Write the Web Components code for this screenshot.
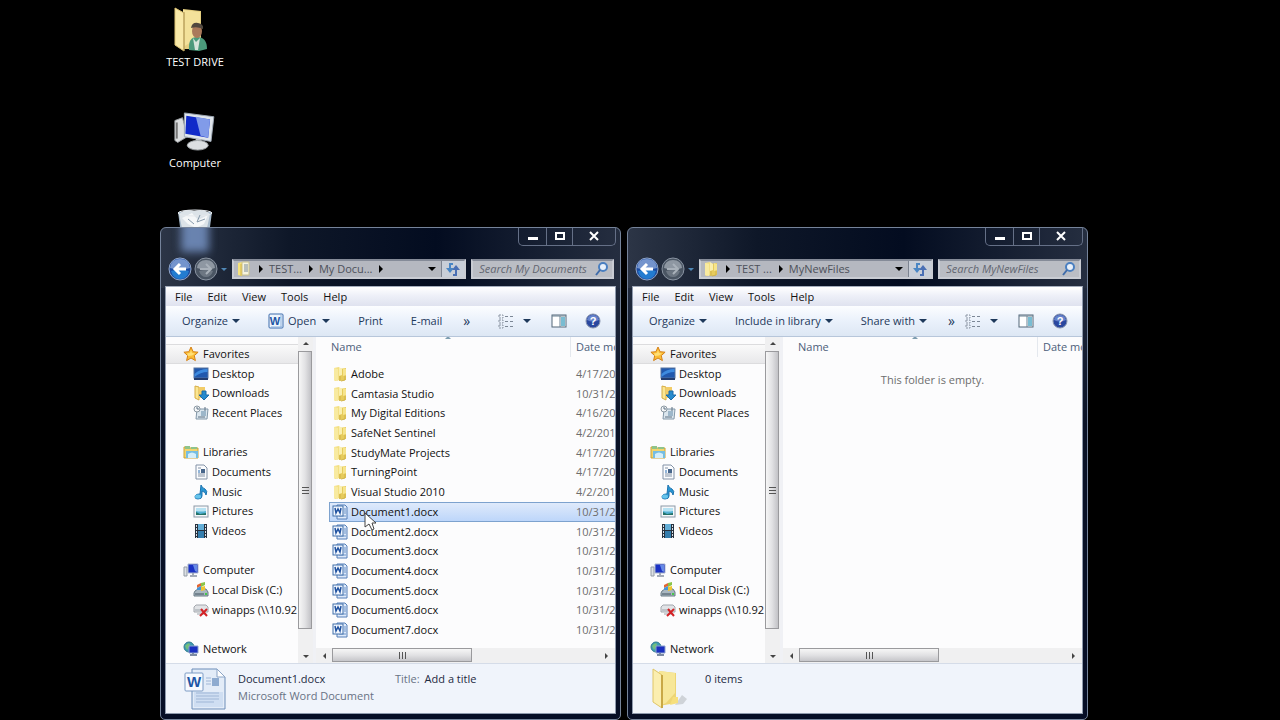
<!DOCTYPE html>
<html lang="en">
<head>
<meta charset="utf-8">
<title>Desktop</title>
<style>
html,body{margin:0;height:100%;background:#000}
body{font:11px/16px "Open Sans","Noto Sans",sans-serif}
</style>
</head>
<body>
<desk-top>
  <desktop-icon slot="icons" icon="userfolder" label="TEST DRIVE"></desktop-icon>
  <desktop-icon slot="icons" icon="bigcomputer" label="Computer"></desktop-icon>
  <desktop-icon slot="icons" icon="bin" label=""></desktop-icon>

  <explorer-window crumbs="TEST...|My Docu...|" icon="docfolder" search="Search My Documents" shade>
    <tool-button slot="tools" menu>Organize</tool-button>
    <tool-button slot="tools" icon="word" menu wide>Open</tool-button>
    <tool-button slot="tools">Print</tool-button>
    <tool-button slot="tools">E-mail</tool-button>
    <file-list files="Adobe:4/17/20|Camtasia Studio:10/31/2|My Digital Editions:4/16/20|SafeNet Sentinel:4/2/201|StudyMate Projects:4/17/20|TurningPoint:4/17/20|Visual Studio 2010:4/2/201|Document1.docx:10/31/2|Document2.docx:10/31/2|Document3.docx:10/31/2|Document4.docx:10/31/2|Document5.docx:10/31/2|Document6.docx:10/31/2|Document7.docx:10/31/2" selected="Document1.docx"></file-list>
    <details-pane slot="details" icon="bigdoc">
      <span slot="name">Document1.docx</span>
      <span slot="kind">Microsoft Word Document</span>
      <span slot="label">Title:</span>
      <span slot="value">Add a title</span>
    </details-pane>
  </explorer-window>

  <explorer-window crumbs="TEST ...|MyNewFiles" icon="folder" search="Search MyNewFiles">
    <tool-button slot="tools" menu>Organize</tool-button>
    <tool-button slot="tools" menu>Include in library</tool-button>
    <tool-button slot="tools" menu>Share with</tool-button>
    <file-list files=""></file-list>
    <details-pane slot="details" icon="bigfolder">
      <span slot="name">0 items</span>
    </details-pane>
  </explorer-window>
  <ui-icon slot="pointer" name="pointer"></ui-icon>
</desk-top>

<script>
const ICONS = {
  folder: [16,16,'<path d="M2 2l5-1 1 13-5 1-1-1z" fill="#f3df83"/><path d="M7 3l7-1v12l-7 1z" fill="#e6cb5c"/><path d="M2 2l4 1v12l-4-1z" fill="#f8eaa0"/><path d="M7 1l3 2v6l-3 1z" fill="#faefae"/><path d="M11 2l3 1v6l-3 1z" fill="#f6e48c"/><path d="M8 10v5M13 10v4l-4 1" stroke="#d0b246" fill="none"/>'],
  docfolder: [16,16,'<path d="M2 2l4-1v14l-4-1z" fill="#f6e27a"/><path d="M6 1h7v13H6z" fill="#f5f3df" stroke="#c8c08a"/><path d="M8 4h4M8 6h4M8 8h4M8 10h4" stroke="#7b8a96"/><path d="M5 3v12" stroke="#d3b64a"/>'],
  word: [16,16,'<rect x="1" y="1" width="14" height="14" rx="1" fill="#eef5fd" stroke="#3d6cad"/><path d="M13 2v12M3 14h11" stroke="#8db1dd"/><text x="7" y="12" text-anchor="middle" font-family="Liberation Sans" font-weight="700" font-size="11" fill="#2256a4">W</text>'],
  docx: [16,16,'<path d="M5 1h8l2 2v12H5z" fill="#dfeafa" stroke="#547fb8"/><path d="M12 5h2M12 7h2M12 9h2M7 12h7" stroke="#6d94c8"/><rect x="1" y="2" width="10" height="10" fill="#f3f8ff" stroke="#416fa9"/><path d="M3 4l1 5 2-4 2 4 1-5" fill="none" stroke="#2052a0" stroke-width="1.5"/>'],
  star: [16,16,'<path d="M8 1l2.1 4.7 5 .5-3.8 3.4 1.1 5L8 12l-4.4 2.6 1.1-5L.9 6.2l5-.5z" fill="#fbbd35" stroke="#d58118"/><path d="M8 4l1 3 3 .4-3 2-4 .5-1-2.5 3-.4z" fill="#ffdf76"/>'],
  desktop: [16,16,'<rect x="1" y="2" width="14" height="10" fill="#2158ad" stroke="#5472a0"/><path d="M1.500 8q5-5 13-5v3q-7 0-13 5z" fill="#3e8bdf"/><path d="M1 13h14" stroke="#243d6e" stroke-width="2"/>'],
  downloads: [16,16,'<path d="M2 1l4 1v13l-4-2z" fill="#fbe692" stroke="#d6ac44"/><path d="M6 2h6v11H6z" fill="#f2cc68"/><path d="M9 6h4v4h3l-5 5-5-5h3z" fill="#278bce" stroke="#1b6aa9"/>'],
  recent: [16,16,'<path d="M4 4h11l-1 10H3z" fill="#dbe6ee" stroke="#8297a8"/><path d="M8 6h5v5H8z" fill="#9db7ca"/><circle cx="4" cy="4" r="3" fill="#f5f7f9" stroke="#8b98a2"/><path d="M4 2v2h2M5 12h7M12 2v4" stroke="#5d7182" fill="none"/>'],
  libraries: [16,16,'<path d="M1 3h5l1 1h8v10H1z" fill="#f2d46d" stroke="#c9a33a"/><path d="M2 2h5v3H2zM8 3h6v2H8z" fill="#8fc48a"/><path d="M3 7h12v7H3z" fill="#75bde2"/><path d="M5 10q4-3 8 0v4H5z" fill="#d4eefa"/>'],
  documents: [16,16,'<path d="M3 1h8l3 3v11H3z" fill="#fbfcfe" stroke="#8392a6"/><path d="M5 4h3M5 10h7M5 12h7" stroke="#8291a4"/><path d="M8 5h4v4H8z" fill="#48668b"/><path d="M5 6h2v3H5z" fill="#92b5d9"/>'],
  music: [16,16,'<path d="M8 1q1 3 4 4 3 2 1 6 0-3-4-4v5q0 3-4 3-3 0-3-2 0-3 5-3z" fill="#2996d3" stroke="#1d74b0"/><ellipse cx="5" cy="12.500" rx="3" ry="2" fill="#67c4eb"/>'],
  pictures: [16,16,'<rect x="1" y="3" width="14" height="11" fill="#f6f8fa" stroke="#8c99a7"/><path d="M3 5h10v7H3z" fill="#55b2d4"/><path d="M3 5h10v3q-5 1-10 0z" fill="#b7e2f2"/><path d="M3 9l4 2 6-1v2H3z" fill="#247268"/>'],
  videos: [16,16,'<path d="M2 1h12v14H2z" fill="#28323e"/><path d="M5 1h6v6H5z" fill="#62add6"/><path d="M5 8h6v7H5z" fill="#357eae"/><path d="M3.500 2v13M12.500 2v13" stroke="#d8e0e8" stroke-dasharray="2 1"/>'],
  computer: [16,16,'<path d="M1 5h3v9H1z" fill="#dce0e5" stroke="#949ca5"/><path d="M5 2h10v9H5z" fill="#1b32c4" stroke="#a9b5cf"/><path d="M10 3h4v7l-2-1z" fill="#668ae6"/><path d="M10 11v2M7 14h7" stroke="#a3abb8" stroke-width="2"/>'],
  disk: [16,16,'<path d="M2 9l3-2h8l2 3v4H1v-3z" fill="#a9b7c0" stroke="#697a84"/><path d="M2 12h9" stroke="#41515f"/><path d="M12 12h2" stroke="#45c94b" stroke-width="2"/><path d="M4 3l4-2v3L4 6z" fill="#e36632"/><path d="M8 1l4-1v3L8 5z" fill="#8ac447"/><path d="M4 6l4-2v4H4z" fill="#4695d8"/><path d="M8 5l4-1v4L8 9z" fill="#f0c52f"/>'],
  netdrive: [16,16,'<path d="M1 5l2-2h10l2 2v5H1z" fill="#e1e3e6" stroke="#a3a7ad"/><path d="M2 8h8M4 12h9" stroke="#9da4ab"/><path d="M8 7l6 7M14 7l-7 7" stroke="#d32226" stroke-width="2"/>'],
  network: [16,16,'<circle cx="6" cy="6" r="5" fill="#3f9ab2" stroke="#307b8e"/><path d="M2 5q3-4 5-2L6 6 4 9z" fill="#73bf7d"/><path d="M6 5h9v7H6z" fill="#1a2fc0" stroke="#8ba1cd"/><path d="M10 12v2M7 14h7" stroke="#7c8ba3" stroke-width="2"/>'],
  refresh: [16,16,'<path d="M8 3H5v6" fill="none" stroke="#4a86c4" stroke-width="2"/><path d="M1 7h8l-4 5z" fill="#4a86c4"/><path d="M8 14h3V8" fill="none" stroke="#4a6fb4" stroke-width="2"/><path d="M7 9h8l-4-5z" fill="#4a6fb4"/>'],
  search: [16,16,'<circle cx="9" cy="6" r="4" fill="#e8f0fa" stroke="#4a7fc0" stroke-width="2"/><path d="M6 9l-4 5" stroke="#3f6ba9" stroke-width="2"/>'],
  views: [16,16,'<path d="M1 2h4v3H1zM1 7h4v3H1zM1 12h4v3H1z" fill="none" stroke="#8b95a3" stroke-dasharray="2 1"/><path d="M7 3.500h3M12 3.500h3M7 8.500h3M12 8.500h3M7 13.500h3M12 13.500h3" stroke="#7c8796"/>'],
  pane: [16,16,'<rect x="1" y="2" width="14" height="12" fill="#fff" stroke="#536779"/><path d="M10 4h4v9h-4z" fill="#79bcd2"/><path d="M9 3v11M1 3h14" stroke="#6b8192"/>'],
  help: [16,16,'<circle cx="8" cy="8" r="7" fill="#2a479f" stroke="#8995ae"/><path d="M2 7q6 3 12 0-1-5-6-5T2 7" fill="#6582cb"/><text x="8" y="12" text-anchor="middle" font-family="Liberation Sans" font-weight="700" font-size="11" fill="#fff">?</text>'],
  back: [24,24,'<circle cx="12" cy="12" r="11" fill="#1c4ba0" stroke="#91a5c7"/><path d="M2 11Q3 2 12 2t10 9q-10 3-20 0" fill="#7494cd"/><path d="M3 14q9-3 18 0-2 8-9 8t-9-8" fill="#237cd0"/><path d="M18 12H8M12 7l-5 5 5 5" stroke="#fff" stroke-width="3" fill="none"/>'],
  forward: [24,24,'<circle cx="12" cy="12" r="11" fill="#4a5563" stroke="#8a94a2"/><path d="M3 11q1-8 9-8t9 8q-9 3-18 0" fill="#8e97a2"/><path d="M5 14q7-2 14 0-2 6-7 6t-7-6" fill="#6c7682"/><path d="M6 12h10M12 7l5 5-5 5" stroke="#a9b1ba" stroke-width="2" fill="none"/>'],
  down: [8,6,'<path d="M0 1h8L4 5z" fill="currentColor"/>'],
  right: [6,8,'<path d="M1 0l4 4-4 4z" fill="currentColor"/>'],
  left: [6,8,'<path d="M5 1L2 4l3 3z" fill="currentColor"/>'],
  up: [8,6,'<path d="M1 4h6L4 1z" fill="currentColor"/>'],
  smalldown: [8,6,'<path d="M1 2h6L4 5z" fill="currentColor"/>'],
  smallright: [6,8,'<path d="M1 1l3 3-3 3z" fill="currentColor"/>'],
  min: [12,10,'<path d="M1 6h10v3H1z" fill="#fff"/>'],
  max: [12,10,'<path d="M2 2h8v6H2z" fill="none" stroke="#fff" stroke-width="2"/>'],
  close: [12,10,'<path d="M2 1l8 8M10 1L2 9" stroke="#fff" stroke-width="2"/>'],
  pointer: [14,22,'<path d="M1 1v14l4-3 3 6 2-1-2-6h4z" fill="#fff" stroke="#444"/>'],
  bigdoc: [42,42,'<path d="M8 1h25l8 8v32H8z" fill="#e3ecf8" stroke="#6c8db8"/><path d="M10 24h29v15H10z" fill="#cfdef2"/><path d="M33 1v8h8z" fill="#fff" stroke="#8ba4c6"/><path d="M22 10h5M22 13h5M22 16h5M12 25h23M12 28h23M12 31h23M12 34h18" stroke="#9fb6d6"/><path d="M28 10h7v8h-7z" fill="#8eabd0"/><rect x="1" y="5" width="18" height="18" rx="1" fill="#f7faff" stroke="#7c9bc4"/><text x="10" y="19" text-anchor="middle" font-family="Liberation Sans" font-weight="700" font-size="15" fill="#1e56a5">W</text>'],
  bigfolder: [42,42,'<g transform="translate(-3)"><path d="M27 37l7-10 5 4-4 5z" fill="#cfd3d8"/><path d="M11 3l17 2v30l-17 3z" fill="#edd574"/><path d="M11 3l16 2v20l-9 10-7 3z" fill="#f7e798"/><path d="M5 1l9 6v33l-9-6z" fill="#fbeeb0" stroke="#e0c566"/><path d="M14 7v33" stroke="#c9a846" stroke-width="2"/><path d="M25 29h5v6l-8 2z" fill="#f6df7d"/></g>'],
  userfolder: [46,46,'<g transform="translate(-3)"><path d="M14 2l18 2v38H14z" fill="#e5cf80"/><path d="M14 3l17 2v25l-17 10z" fill="#f3e19a"/><path d="M6 1l9 5v38l-9-6z" fill="#f9e9a8" stroke="#dec475"/><path d="M15 5v39" stroke="#aa9153"/><path d="M20 43q-1-13 8-13 10 0 10 12l-8 2z" fill="#4b9a7b"/><path d="M24 31l3 4 4-4-2 12h-3z" fill="#d5e5db"/><ellipse cx="28" cy="24" rx="5" ry="7" fill="#aa795b"/><path d="M22 21q1-6 7-5 6 1 5 6-6-3-12-1" fill="#51483f"/></g>'],
  bigcomputer: [44,46,'<g transform="translate(0 4) scale(.95)"><path d="M2 9l8-3 5 20-10 6-3-2z" fill="#dcdedf" stroke="#9b9fa2"/><path d="M4 11v17" stroke="#777" stroke-width="2"/><path d="M12 1l31 4-3 26-28-5z" fill="#dfe5eb" stroke="#9ca7b3"/><path d="M14 4l25 4-2 19-24-4z" fill="#102ac9"/><path d="M24 5l15 3-2 19-8-2z" fill="#819be9"/><path d="M24 28l6 1-1 7h-6z" fill="#c0c5c9"/><ellipse cx="26" cy="35" rx="11" ry="5" fill="#dcdfe2" stroke="#a0a5a9"/></g>'],
  bin: [44,42,'<path d="M5 3h34l-5 37H10z" fill="#a6b9ca"/><path d="M6 5q6-6 15-3 10-3 16 3l-3 14H9z" fill="#dce3e8"/><path d="M9 9l10-5 6 7 10-5-4 9-8 4-8-4z" fill="#f5f7f8"/><ellipse cx="22" cy="4" rx="17" ry="3" fill="none" stroke="#e4e8ec"/><path d="M15 10l6 5M27 6l-3 7 8-3" stroke="#8799aa" fill="none"/>']
};

function define(name, render) {
  customElements.define(name, class extends HTMLElement {
    connectedCallback() {
      if (this.shadowRoot) return;
      this.attachShadow({mode: 'open'}).innerHTML = render(this);
    }
  });
}
const reset = 'button{font:inherit;color:inherit;background:none;border:0;padding:0;display:flex;align-items:center}*{box-sizing:border-box}';

define('ui-icon', el => {
  const [w, h, art] = ICONS[el.getAttribute('name')];
  return `<style>:host{display:block;flex:none}svg{display:block}</style><svg width="${w}" height="${h}" viewBox="0 0 ${w} ${h}" aria-hidden="true">${art}</svg>`;
});

define('desk-top', () => `<style>
  :host{display:block;position:relative;box-sizing:border-box;width:75%;min-height:100vh;margin:0 auto;padding-top:227px;background:#000}
  .icons{position:absolute;top:7px;left:0;width:70px;display:grid;grid-auto-rows:101px}
  main{position:relative;display:grid;grid-template-columns:1fr 1fr;gap:6px;padding-right:32px;height:calc(100vh - 227px);min-height:493px}
  .pointer{position:absolute;left:204px;top:512px}
  </style><div class="icons"><slot name="icons"></slot></div><main><slot></slot></main><div class="pointer"><slot name="pointer"></slot></div>`);

define('desktop-icon', el => `<style>
  :host{display:flex;flex-direction:column;align-items:center;color:#fff}
  ui-icon{height:47px}
  </style><ui-icon name="${el.getAttribute('icon')}"></ui-icon><span>${el.getAttribute('label')}</span>`);

define('tool-button', el => `<style>${reset}
  :host{display:block;color:#1e395b}
  button{padding:0 14px;gap:4px;height:24px;white-space:nowrap}
  .wide{margin-left:2px}
  </style><button type="button">${el.hasAttribute('icon') ? `<ui-icon name="${el.getAttribute('icon')}"></ui-icon>` : ''}<slot></slot>${el.hasAttribute('menu') ? `<ui-icon name="down" class="${el.hasAttribute('wide') ? 'wide' : ''}"></ui-icon>` : ''}</button>`);

define('scroll-bar', el => {
  const v = el.hasAttribute('vertical');
  return `<style>${reset}
  :host{display:flex;box-sizing:border-box;color:#444;background:#f0f0f1;${v ? 'flex-direction:column;width:15px' : 'height:15px'}}
  button{flex:none;justify-content:center;${v ? 'height:14px' : 'width:16px'}}
  .track{flex:1;display:flex;flex-direction:${v ? 'column' : 'row'}}
  .thumb{display:flex;align-items:center;justify-content:center;border:1px solid #9a9a9d;${v
    ? 'width:14px;flex:277 0 0;background:linear-gradient(90deg,#f6f6f6,#e2e2e4 50%,#c2c2c6)'
    : 'height:14px;flex:139 0 0;background:linear-gradient(#f6f6f6,#e2e2e4 50%,#c6c6ca)'}}
  .rest{flex:${v ? '20' : '127'} 0 0}
  .grip{width:7px;height:7px;background:repeating-linear-gradient(${v ? '0deg' : '90deg'},#555 0 1px,transparent 1px 3px)}
  </style><button type="button" aria-label="Back"><ui-icon name="${v ? 'up' : 'left'}"></ui-icon></button>
  <div class="track"><div class="thumb"><div class="grip"></div></div><div class="rest"></div></div>
  <button type="button" aria-label="Forward"><ui-icon name="${v ? 'smalldown' : 'smallright'}"></ui-icon></button>`;
});

const NAV = [['star','Favorites',0],['desktop','Desktop',1],['downloads','Downloads',1],['recent','Recent Places',1],null,
  ['libraries','Libraries',0],['documents','Documents',1],['music','Music',1],['pictures','Pictures',1],['videos','Videos',1],null,
  ['computer','Computer',0],['disk','Local Disk (C:)',1],['netdrive','winapps (\\\\10.92',1],null,['network','Network',0]];
define('nav-tree', () => `<style>
  :host{display:block;min-width:0;overflow:hidden;padding-top:7px;background:#fcfcfd}
  ul{list-style:none;margin:0;padding:0;height:315px;display:grid;grid-template-rows:repeat(16,1fr)}
  li{min-height:0;display:flex}
  a{flex:1;display:flex;align-items:center;gap:4px;padding-left:17px;color:#111;text-decoration:none;white-space:nowrap}
  a.child{padding-left:27px;gap:3px}
  li:first-child a{background:linear-gradient(#fafafa,#e8e8ea);border:solid #dcdcde;border-width:1px 0;box-sizing:border-box}
  </style><nav><ul>${NAV.map(n => n ? `<li><a href="#" class="${n[2] ? 'child' : ''}"><ui-icon name="${n[0]}"></ui-icon><span>${n[1]}</span></a></li>` : '<li></li>').join('')}</ul></nav>`);

define('file-list', el => {
  const files = el.getAttribute('files').split('|').filter(Boolean).map(f => f.split(':'));
  return `<style>
  :host{display:flex;flex-direction:column;flex:1;min-width:0;overflow:hidden;background:#fcfcfd}
  table,thead{display:block}
  tr{display:grid;grid-template-columns:15px 239px 1fr;align-items:center;position:relative}
  th,td{padding:0;font-weight:400;text-align:left;white-space:nowrap;min-width:0}
  th{color:#4c607a;line-height:20px}
  th:nth-child(1),td:nth-child(1){grid-column:2}
  th:last-child{border-left:1px solid #e4e8ee;padding-left:5px}
  thead ui-icon{position:absolute;left:128px;top:-2px;color:#7e9db0}
  tbody{display:grid;grid-template-rows:repeat(14,1fr);height:276px;margin-top:7px}
  tbody tr{min-height:0;margin-left:13px;grid-template-columns:2px 242px 1fr;border:1px solid transparent;box-sizing:border-box}
  td:first-child{display:flex;align-items:center;gap:3px;color:#111}
  td:last-child{color:#6d6d6d;padding-left:2px}
  tr.on{border-color:#7da2ce;border-right:0;background:linear-gradient(#dfeafb,#bdd6fa)}
  p{margin:15px 0 0;text-align:center;color:#6d6d6d}
  </style><table><thead><tr><th scope="col">Name<ui-icon name="up"></ui-icon></th><th scope="col">Date mo</th></tr></thead>
  ${files.length ? `<tbody>${files.map(([n, d]) => `<tr class="${n === el.getAttribute('selected') ? 'on' : ''}"><td><ui-icon name="${n.endsWith('.docx') ? 'docx' : 'folder'}"></ui-icon>${n}</td><td>${d}</td></tr>`).join('')}</tbody>` : ''}</table>
  ${files.length ? '' : '<p>This folder is empty.</p>'}`;
});

define('details-pane', el => `<style>
  :host{display:grid;grid-template-columns:42px 1fr 244px;column-gap:12px;padding:4px 0 0 18px;height:50px;box-sizing:border-box;background:#f0f4fb;border-top:1px solid #d5dce8;color:#1e2a42;white-space:nowrap}
  .text{display:grid;grid-auto-rows:17px;align-content:start;padding-top:3px;min-width:0}
  .kind,.label{color:#687284}
  .meta{padding-top:3px;display:flex;gap:5px;margin-left:24px}
  </style><ui-icon name="${el.getAttribute('icon')}"></ui-icon>
  <div class="text"><slot name="name"></slot><span class="kind"><slot name="kind"></slot></span></div>
  <div class="meta"><span class="label"><slot name="label"></slot></span><slot name="value"></slot></div>`);

define('explorer-window', el => `<style>${reset}
  :host{position:relative;display:flex;flex-direction:column;box-sizing:border-box;min-width:0;border:1px solid #75839a;border-radius:6px 6px 5px 5px;padding:0 4px 5px 4px;overflow:hidden;
    background:linear-gradient(90deg,#2c3546,#0e1728 28%,#030c20 60%,#252e40) top/100% 60px no-repeat,linear-gradient(#2a3447,#0a1226 40%,#060e26)}
  :host([shade])::before{content:"";position:absolute;left:20px;top:-8px;width:28px;height:32px;background:#7b99cc;opacity:.8;filter:blur(4px)}
  .caption{align-self:flex-end;display:grid;grid-template-columns:27px 26px 1fr;width:98px;height:18px;border:1px solid #657087;border-top:0;border-radius:0 0 5px 5px;position:relative}
  .caption button{justify-content:center;padding-bottom:2px}
  .caption button+button{border-left:1px solid #657087}
  .bar{position:relative;display:flex;align-items:center;height:24px;margin:11px 2px 5px 3px}
  .bar>button{flex:none}
  .recent{color:#4f87b5;width:12px;justify-content:center}
  .fwd{margin-left:2px}
  .address{flex:1;min-width:0;display:flex;align-items:center;height:20px;margin-left:2px;border:2px solid #c9ccd3;border-top-color:#858b98;background:#b5b8c0;color:#4d515a;white-space:nowrap}
  .address .crumb{padding-left:6px;gap:5px}
  .address .crumb ui-icon,.drop{color:#000}
  .address>ui-icon{margin-left:2px}
  .drop{margin-left:auto;margin-right:5px}
  .refresh{width:23px;height:16px;justify-content:center;border-left:1px solid #7d8491;background:#c8ced8}
  .search{width:32%;min-width:0;display:flex;align-items:center;height:20px;margin-left:5px;padding:0 2px 0 6px;border:2px solid #c9ccd3;border-top-color:#858b98;background:#babdc4}
  input{flex:1;min-width:0;border:0;padding:0;background:none;font:italic 11px/16px "Open Sans","Noto Sans",sans-serif;outline:0}
  input::placeholder{color:#626671;opacity:1}
  .client{position:relative;flex:1;display:flex;flex-direction:column;min-height:0;border:1px solid #8f9aad;border-top-color:#a4adbc;background:#fcfcfd}
  .menu{display:flex;gap:15px;height:19px;padding-left:9px;background:linear-gradient(#fff,#eef0f8 45%,#dfe2ef);color:#111}
  .tools{display:flex;align-items:center;height:31px;padding:0 14px 0 2px;background:linear-gradient(#fcfdff,#eaf1fb 50%,#dde7f4);border-bottom:1px solid #b7c6da;color:#1e395b}
  .more{padding:0 7px;font-size:14px}
  .right{margin-left:auto;display:flex;align-items:center}
  .views{gap:9px;margin-right:20px}
  .pane{margin-right:18px}
  .body{flex:1;display:grid;grid-template-columns:132px 15px 3px minmax(0,1fr);min-height:0}
  .split{background:#f0f1f5}
  .files{display:flex;flex-direction:column;min-width:0}
  </style>
  <div class="caption"><button type="button" aria-label="Minimize"><ui-icon name="min"></ui-icon></button><button type="button" aria-label="Maximize"><ui-icon name="max"></ui-icon></button><button type="button" aria-label="Close"><ui-icon name="close"></ui-icon></button></div>
  <div class="bar">
    <button type="button" aria-label="Back"><ui-icon name="back"></ui-icon></button><button type="button" class="fwd" aria-label="Forward"><ui-icon name="forward"></ui-icon></button>
    <button type="button" class="recent" aria-label="Recent pages"><ui-icon name="smalldown"></ui-icon></button>
    <div class="address"><ui-icon name="${el.getAttribute('icon')}"></ui-icon>${el.getAttribute('crumbs').split('|').map(c => `<button type="button" class="crumb"><ui-icon name="right"></ui-icon>${c}</button>`).join('')}
      <button type="button" class="drop" aria-label="Previous locations"><ui-icon name="down"></ui-icon></button><button type="button" class="refresh" aria-label="Refresh"><ui-icon name="refresh"></ui-icon></button></div>
    <label class="search"><input type="text" aria-label="Search" placeholder="${el.getAttribute('search')}"><ui-icon name="search"></ui-icon></label>
  </div>
  <div class="client">
    <div class="menu">${['File','Edit','View','Tools','Help'].map(m => `<button type="button">${m}</button>`).join('')}</div>
    <div class="tools"><slot name="tools"></slot><button type="button" class="more" aria-label="More">»</button>
      <div class="right"><button type="button" class="views" aria-label="Views"><ui-icon name="views"></ui-icon><ui-icon name="down"></ui-icon></button><button type="button" class="pane" aria-label="Preview pane"><ui-icon name="pane"></ui-icon></button><button type="button" aria-label="Help"><ui-icon name="help"></ui-icon></button></div></div>
    <div class="body"><nav-tree></nav-tree><scroll-bar vertical></scroll-bar><div class="split"></div>
      <div class="files"><slot></slot><scroll-bar></scroll-bar></div></div>
    <slot name="details"></slot>
  </div>`);
</script>
</body>
</html>
